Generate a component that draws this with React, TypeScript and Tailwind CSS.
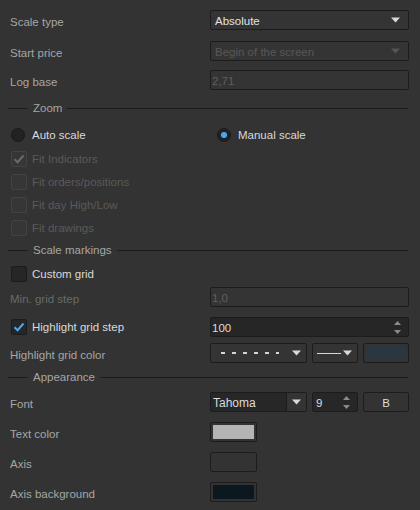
import React from "react";

const font = { fontFamily: '"Liberation Sans", Arial, sans-serif' };

function Arrow({ color = "#d8d8d8" }: { color?: string }) {
  return (
    <svg width="9" height="6" viewBox="0 0 9 6" className="shrink-0">
      <path d="M0 0.5h9L4.5 5.5z" fill={color} />
    </svg>
  );
}

function SpinArrows() {
  return (
    <div className="flex flex-col gap-[5px] items-center">
      <svg width="7" height="4" viewBox="0 0 7 4">
        <path d="M3.5 0L7 4H0z" fill="#8a8a8a" />
      </svg>
      <svg width="7" height="4" viewBox="0 0 7 4">
        <path d="M0 0h7L3.5 4z" fill="#8a8a8a" />
      </svg>
    </div>
  );
}

function Dropdown({ value, disabled }: { value: string; disabled?: boolean }) {
  return (
    <div className="w-[199px] h-[20px] rounded-[2px] border border-[#1c1c1c] bg-[#343434] flex items-center justify-between pl-[4px] pr-[8px]">
      <span className={`pt-[3px] ${disabled ? "text-[#585858]" : "text-[#e2e2e2]"}`}>{value}</span>
      <Arrow color={disabled ? "#555555" : "#d8d8d8"} />
    </div>
  );
}

function TextInput({ value, dark, spin }: { value: string; dark?: boolean; spin?: boolean }) {
  return (
    <div
      className={`w-[199px] h-[20px] rounded-[2px] border border-[#1c1c1c] flex items-center justify-between pl-[1px] pr-[7px] ${
        dark ? "bg-[#262626] text-[#dcdcdc]" : "bg-[#343434] text-[#5e5e5e]"
      }`}
    >
      <span className="pt-[3px]">{value}</span>
      {spin && <SpinArrows />}
    </div>
  );
}

function Checkbox({ checked, disabled, label }: { checked?: boolean; disabled?: boolean; label: string }) {
  return (
    <div className="flex items-center h-[16px] ml-[1px]">
      <div
        className={`w-[16px] h-[16px] rounded-[2px] border flex items-center justify-center ${
          disabled ? "border-[#434343] bg-[#363636]" : "border-[#1c1c1c] bg-[#262626]"
        }`}
      >
        {checked && (
          <svg width="12" height="10" viewBox="0 0 12 10">
            <path
              d="M1.5 5.2L4.6 8.2L10.5 1.5"
              fill="none"
              stroke={disabled ? "#6a6a6a" : "#49a6ef"}
              strokeWidth="2"
            />
          </svg>
        )}
      </div>
      <span className={`ml-[5px] pt-[2px] ${disabled ? "text-[#5a5a5a]" : "text-[#dadada]"}`}>{label}</span>
    </div>
  );
}

function Radio({ selected, label }: { selected?: boolean; label: string }) {
  return (
    <div className="flex items-center h-[16px]">
      <div className="w-[14px] h-[14px] rounded-full bg-[#222222] border border-[#1a1a1a] flex items-center justify-center">
        {selected && <div className="w-[6px] h-[6px] rounded-full bg-[#4aa8f0]" />}
      </div>
      <span className="ml-[7px] pt-[2px] text-[#dadada]">{label}</span>
    </div>
  );
}

function Separator({ title, mt }: { title: string; mt: string }) {
  return (
    <div className={`flex items-center h-[12px] -ml-[2px] mr-[1px] ${mt}`}>
      <div className="w-[20px] h-px bg-[#1c1c1c]" />
      <span className="mx-[5px] pt-[1px] text-[#a6a6a6]">{title}</span>
      <div className="flex-1 h-px bg-[#1c1c1c]" />
    </div>
  );
}

function Swatch({ fill }: { fill?: string }) {
  return (
    <div className="w-[47px] h-[20px] rounded-[2px] border border-[#1c1c1c] bg-[#333333] p-[2px]">
      {fill && <div className="w-full h-full" style={{ backgroundColor: fill }} />}
    </div>
  );
}

function Row({ label, mt, children, dim }: { label: string; mt: string; children: React.ReactNode; dim?: boolean }) {
  return (
    <div className={`flex items-center justify-between h-[20px] ${mt}`}>
      <span className={`pt-[6px] ${dim ? "text-[#6a6a6a]" : "text-[#a6a6a6]"}`}>{label}</span>
      <div className="w-[199px] flex">{children}</div>
    </div>
  );
}

export default function App() {
  return (
    <div
      className="w-[420px] h-[510px] bg-[#333333] overflow-hidden pl-[10px] pr-[11px] pt-[10px] text-[11.5px] leading-none"
      style={font}
    >
      <Row label="Scale type" mt="mt-0">
        <Dropdown value="Absolute" />
      </Row>
      <Row label="Start price" mt="mt-[11px]">
        <Dropdown value="Begin of the screen" disabled />
      </Row>
      <Row label="Log base" mt="mt-[9px]">
        <TextInput value="2,71" />
      </Row>

      <Separator title="Zoom" mt="mt-[12px]" />

      <div className="flex items-center mt-[13px] ml-[1px]">
        <div className="w-[199px]">
          <Radio label="Auto scale" />
        </div>
        <div className="ml-[7px]">
          <Radio label="Manual scale" selected />
        </div>
      </div>

      <div className="flex flex-col gap-[7px] mt-[8px]">
        <Checkbox label="Fit Indicators" checked disabled />
        <Checkbox label="Fit orders/positions" disabled />
        <Checkbox label="Fit day High/Low" disabled />
        <Checkbox label="Fit drawings" disabled />
      </div>

      <Separator title="Scale markings" mt="mt-[8px]" />

      <div className="mt-[10px]">
        <Checkbox label="Custom grid" />
      </div>

      <Row label="Min. grid step" mt="mt-[5px]" dim>
        <TextInput value="1,0" />
      </Row>

      <div className="flex items-center justify-between h-[20px] mt-[10px]">
        <Checkbox label="Highlight grid step" checked />
        <TextInput value="100" dark spin />
      </div>

      <Row label="Highlight grid color" mt="mt-[6px]">
        <div className="flex gap-[5px]">
          <div className="w-[97px] h-[20px] rounded-[2px] border border-[#1c1c1c] bg-[#343434] flex items-center pl-[10px] pr-[5px]">
            <div className="flex gap-[7px] flex-1">
              {[0, 1, 2, 3, 4, 5].map((i) => (
                <div key={i} className={`h-[2px] bg-[#d6d6d6] ${i === 5 ? "w-[3px]" : "w-[4px]"}`} />
              ))}
            </div>
            <Arrow />
          </div>
          <div className="w-[46px] h-[20px] rounded-[2px] border border-[#1c1c1c] bg-[#343434] flex items-center pl-[4px] pr-[4px] gap-[2px]">
            <div className="w-[24px] h-px bg-[#d6d6d6]" />
            <Arrow />
          </div>
          <div className="w-[46px] h-[20px] rounded-[2px] border border-[#1c1c1c] bg-[#333333] p-[2px]">
            <div className="w-full h-full bg-[#2a3640]" />
          </div>
        </div>
      </Row>

      <Separator title="Appearance" mt="mt-[8px]" />

      <Row label="Font" mt="mt-[9px]">
        <div className="flex gap-[5px]">
          <div className="w-[97px] h-[20px] rounded-[2px] border border-[#1c1c1c] bg-[#272727] flex">
            <span className="flex-1 flex items-center pl-[2px] pt-[1px] text-[#dcdcdc] text-[12px]">Tahoma</span>
            <div className="w-[20px] h-full border-l border-[#1c1c1c] bg-[#343434] flex items-center justify-center">
              <Arrow />
            </div>
          </div>
          <div className="w-[46px] h-[20px] rounded-[2px] border border-[#1c1c1c] bg-[#272727] flex items-center justify-between pl-[3px] pr-[7px]">
            <span className="pt-[3px] text-[#dcdcdc]">9</span>
            <SpinArrows />
          </div>
          <div className="w-[46px] h-[20px] rounded-[2px] border border-[#1c1c1c] bg-[#333333] flex items-center justify-center">
            <span className="pt-[3px] text-[#dcdcdc]">B</span>
          </div>
        </div>
      </Row>

      <Row label="Text color" mt="mt-[10px]">
        <Swatch fill="#b4b4b4" />
      </Row>
      <Row label="Axis" mt="mt-[10px]">
        <Swatch />
      </Row>
      <Row label="Axis background" mt="mt-[10px]">
        <Swatch fill="#0b1820" />
      </Row>
    </div>
  );
}
